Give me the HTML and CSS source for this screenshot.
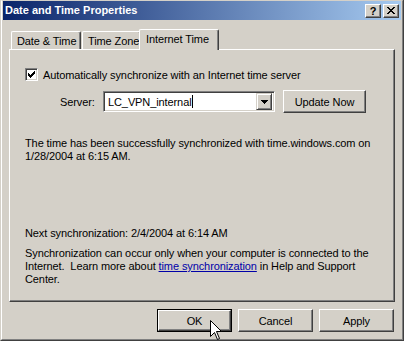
FILE: index.html
```html
<!DOCTYPE html>
<html lang="en">
  <head>
    <meta charset="UTF-8" />
    <title>Date and Time Properties</title>
    <link rel="stylesheet" href="styles.css">
  </head>
  <body>
    <div class="window">
      <div class="frame">
        <!-- title bar -->
        <div class="titlebar">
          <span class="title">Date and Time Properties</span>
          <div class="caption-buttons">
            <div class="cap-btn help">?</div>
            <div class="cap-btn">
              <svg width="8" height="7" viewBox="0 0 8 7" shape-rendering="crispEdges">
                <path d="M0 0h2v1h-2zM6 0h2v1h-2zM1 1h2v1h-2zM5 1h2v1h-2zM2 2h4v1h-4zM3 3h2v1h-2zM2 4h4v1h-4zM1 5h2v1h-2zM5 5h2v1h-2zM0 6h2v1h-2zM6 6h2v1h-2z" fill="#000"/>
              </svg>
            </div>
          </div>
        </div>

        <div class="content">
          <!-- tabs -->
          <div class="tabs">
            <div class="tab tab-date">Date &amp; Time</div>
            <div class="tab tab-zone">Time Zone</div>
            <div class="tab tab-active">Internet Time</div>
          </div>

          <div class="panel">
            <div class="check-row">
              <span class="checkbox">
                <svg width="7" height="7" viewBox="0 0 7 7" shape-rendering="crispEdges">
                  <path d="M6 0h1v3h-1zM5 1h1v3h-1zM4 2h1v3h-1zM3 3h1v3h-1zM2 4h1v3h-1zM1 3h1v3h-1zM0 2h1v3h-1z" fill="#000"/>
                </svg>
              </span>
              <span>Automatically synchronize with an Internet time server</span>
            </div>

            <div class="server-row">
              <span class="server-label">Server:</span>
              <div class="combo">
                <span class="combo-text">LC_VPN_internal<span class="caret"></span></span>
                <span class="combo-btn">
                  <svg width="7" height="4" viewBox="0 0 7 4" shape-rendering="crispEdges">
                    <path d="M0 0h7v1h-7zM1 1h5v1h-5zM2 2h3v1h-3zM3 3h1v1h-1z" fill="#000"/>
                  </svg>
                </span>
              </div>
              <div class="btn update-btn">Update Now</div>
            </div>

            <p class="status">The time has been successfully synchronized with time.windows.com on<br>1/28/2004 at 6:15 AM.</p>

            <p class="next-sync">Next synchronization: 2/4/2004 at 6:14 AM</p>

            <p class="info">Synchronization can occur only when your computer is connected to the<br>Internet.&nbsp; Learn more about <a href="#" class="link">time synchronization</a> in Help and Support<br>Center.</p>
          </div>

          <div class="footer">
            <div class="btn dialog-btn default-btn"><span>OK</span></div>
            <div class="btn dialog-btn">Cancel</div>
            <div class="btn dialog-btn">Apply</div>
          </div>
        </div>
      </div>
    </div>

    <svg class="cursor" width="13" height="21" viewBox="0 0 13 21">
      <path d="M0.5 0.5 L0.5 16.5 L4.5 12.5 L7.5 19.5 L9.5 18.5 L6.5 11.5 L11.5 11.5 Z" fill="#fff" stroke="#000" stroke-width="1"/>
    </svg>
  </body>
</html>
```

FILE: styles.css
```css
body {
  margin: 0;
  padding: 0;
  font-family: Tahoma, "Liberation Sans", sans-serif;
  font-size: 11px;
  letter-spacing: -0.1px;
  color: #000;
  background: #d4d0c8;
}

.window {
  position: relative;
  width: 404px;
  height: 341px;
  box-sizing: border-box;
  display: flex;
  background: #d4d0c8;
  border-left: 1px solid #d4d0c8;
  border-right: 1px solid #404040;
  border-bottom: 1px solid #404040;
}

.frame {
  flex: 1;
  display: flex;
  flex-direction: column;
  border-left: 1px solid #fff;
  border-top: 1px solid #d4d0c8;
  border-right: 1px solid #808080;
  border-bottom: 1px solid #808080;
  padding: 0 1px;
}

/* title bar */
.titlebar {
  height: 19px;
  display: flex;
  align-items: center;
  justify-content: space-between;
  padding: 0 2px 0 2px;
  background: linear-gradient(to right, #0a246a, #a6caf0);
  color: #fff;
  font-weight: bold;
}

.title {
  line-height: 19px;
  letter-spacing: 0;
}

.caption-buttons {
  display: flex;
  gap: 2px;
}

.cap-btn {
  width: 16px;
  height: 14px;
  box-sizing: border-box;
  display: flex;
  align-items: center;
  justify-content: center;
  background: #d4d0c8;
  border: 1px solid;
  border-color: #fff #404040 #404040 #fff;
  box-shadow: inset -1px -1px 0 #808080;
  color: #000;
  font-weight: bold;
  font-size: 11px;
  line-height: 12px;
}

.content {
  flex: 1;
  display: flex;
  flex-direction: column;
  padding: 9px 6px 0 6px;
}

/* tabs */
.tabs {
  display: flex;
  align-items: flex-end;
  height: 20px;
  padding-left: 2px;
  position: relative;
  z-index: 1;
}

.tab {
  height: 18px;
  box-sizing: border-box;
  padding: 0 0 0 5px;
  display: flex;
  align-items: center;
  white-space: nowrap;
  background: #d4d0c8;
  border-top: 1px solid #fff;
  border-left: 1px solid #fff;
  border-right: 1px solid #404040;
  border-radius: 2px 2px 0 0;
  box-shadow: inset -1px 0 0 #808080;
}

.tab-date {
  width: 70px;
}

.tab-zone {
  width: 59px;
  margin-left: 1px;
}

.tab-active {
  width: 80px;
  height: 21px;
  margin: 0 0 -1px -2px;
  padding: 0 0 2px 6px;
}

.panel {
  height: 253px;
  box-sizing: border-box;
  border-top: 1px solid #fff;
  border-left: 1px solid #fff;
  border-right: 1px solid #404040;
  border-bottom: 1px solid #404040;
  box-shadow: inset -1px -1px 0 #808080;
  padding: 18px 15px 0 15px;
}

.check-row {
  display: flex;
  align-items: center;
  gap: 5px;
  height: 13px;
}

.checkbox {
  width: 13px;
  height: 13px;
  box-sizing: border-box;
  display: flex;
  align-items: center;
  justify-content: center;
  background: #fff;
  border: 1px solid;
  border-color: #808080 #fff #fff #808080;
  box-shadow: inset 1px 1px 0 #404040, inset -1px -1px 0 #d4d0c8;
}

.server-row {
  display: flex;
  align-items: center;
  margin-top: 9px;
  height: 23px;
}

.server-label {
  width: 43px;
  margin-left: 35px;
}

.combo {
  width: 172px;
  height: 21px;
  box-sizing: border-box;
  display: flex;
  align-items: center;
  justify-content: space-between;
  background: #fff;
  border: 1px solid;
  border-color: #808080 #fff #fff #808080;
  box-shadow: inset 1px 1px 0 #404040, inset -1px -1px 0 #d4d0c8;
  padding: 2px 2px 2px 4px;
}

.combo-text {
  display: flex;
  align-items: center;
}

.caret {
  display: inline-block;
  width: 1px;
  height: 13px;
  background: #000;
}

.combo-btn {
  width: 16px;
  height: 17px;
  box-sizing: border-box;
  display: flex;
  align-items: center;
  justify-content: center;
  background: #d4d0c8;
  border: 1px solid;
  border-color: #d4d0c8 #404040 #404040 #d4d0c8;
  box-shadow: inset 1px 1px 0 #fff, inset -1px -1px 0 #808080;
}

.btn {
  box-sizing: border-box;
  display: flex;
  align-items: center;
  justify-content: center;
  background: #d4d0c8;
  border: 1px solid;
  border-color: #fff #404040 #404040 #fff;
  box-shadow: inset -1px -1px 0 #808080;
}

.update-btn {
  width: 83px;
  height: 23px;
  margin-left: 8px;
}

.status {
  margin: 24px 0 0 0;
  line-height: 13px;
}

.next-sync {
  margin: 64px 0 0 0;
  line-height: 13px;
}

.info {
  margin: 7px 0 0 0;
  line-height: 13px;
}

.link {
  color: #0000a8;
  text-decoration: underline;
}

/* dialog buttons */
.footer {
  display: flex;
  justify-content: flex-end;
  gap: 6px;
  margin-top: 7px;
  padding-right: 1px;
}

.dialog-btn {
  width: 75px;
  height: 23px;
}

.default-btn {
  border: 1px solid #000;
  box-shadow: none;
}

.default-btn span {
  flex: 1;
  align-self: stretch;
  display: flex;
  align-items: center;
  justify-content: center;
  border: 1px solid;
  border-color: #fff #404040 #404040 #fff;
  box-shadow: inset -1px -1px 0 #808080;
}

.cursor {
  position: absolute;
  left: 210px;
  top: 320px;
}
```
